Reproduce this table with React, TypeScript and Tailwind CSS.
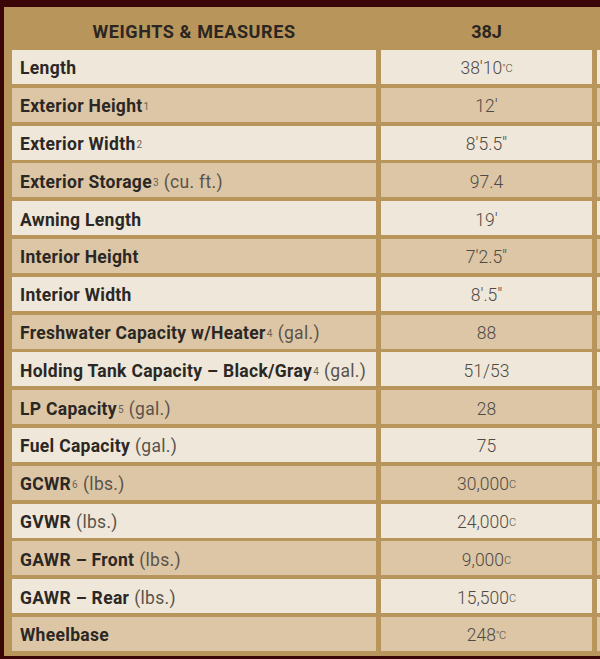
import React from "react";

type Row = { label: React.ReactNode; value: React.ReactNode };

const Sup = ({ children }: { children: React.ReactNode }) => (
  <sup className="text-[10px] font-normal text-[#6b6259] relative -top-[2px] ml-[1px]">{children}</sup>
);
const Unit = ({ children }: { children: React.ReactNode }) => (
  <span className="font-normal text-[#5a534c] ml-[5px]">{children}</span>
);
const VSup = ({ children }: { children: React.ReactNode }) => (
  <sup className="text-[11px] relative -top-[2px]">{children}</sup>
);

const rows: Row[] = [
  { label: <>Length</>, value: <>38'10<VSup>"C</VSup></> },
  { label: <>Exterior Height<Sup>1</Sup></>, value: <>12'</> },
  { label: <>Exterior Width<Sup>2</Sup></>, value: <>8'5.5"</> },
  { label: <>Exterior Storage<Sup>3</Sup><Unit>(cu. ft.)</Unit></>, value: <>97.4</> },
  { label: <>Awning Length</>, value: <>19'</> },
  { label: <>Interior Height</>, value: <>7'2.5"</> },
  { label: <>Interior Width</>, value: <>8'.5"</> },
  { label: <>Freshwater Capacity w/Heater<Sup>4</Sup><Unit>(gal.)</Unit></>, value: <>88</> },
  { label: <>Holding Tank Capacity – Black/Gray<Sup>4</Sup><Unit>(gal.)</Unit></>, value: <>51/53</> },
  { label: <>LP Capacity<Sup>5</Sup><Unit>(gal.)</Unit></>, value: <>28</> },
  { label: <>Fuel Capacity<Unit>(gal.)</Unit></>, value: <>75</> },
  { label: <>GCWR<Sup>6</Sup><Unit>(lbs.)</Unit></>, value: <>30,000<VSup>C</VSup></> },
  { label: <>GVWR<Unit>(lbs.)</Unit></>, value: <>24,000<VSup>C</VSup></> },
  { label: <>GAWR – Front<Unit>(lbs.)</Unit></>, value: <>9,000<VSup>C</VSup></> },
  { label: <>GAWR – Rear<Unit>(lbs.)</Unit></>, value: <>15,500<VSup>C</VSup></> },
  { label: <>Wheelbase</>, value: <>248<VSup>"C</VSup></> },
];

export default function App() {
  return (
    <div
      className="w-[600px] h-[659px] overflow-hidden bg-[#3a0608] pt-[7px] pl-[4px]"
      style={{ fontFamily: "Roboto, 'Liberation Sans', sans-serif" }}
    >
      <div className="w-[620px] bg-[#b8955a] pl-[8px] pb-[5px]">
        <div className="grid grid-cols-[364px_211px_100px] gap-x-[5px] h-[43px] items-center">
          <div className="text-center font-bold text-[18px] tracking-[0.6px] text-[#2b2622] pt-[5px]">
            WEIGHTS &amp; MEASURES
          </div>
          <div className="text-center font-bold text-[18px] text-[#2b2622] pt-[5px]">38J</div>
          <div />
        </div>
        <div className="flex flex-col gap-[3.8px]">
          {rows.map((r, i) => {
            const bg = i % 2 === 0 ? "bg-[#efe7d9]" : "bg-[#dcc6a5]";
            return (
              <div key={i} className="grid grid-cols-[364px_211px_100px] gap-x-[5px] h-[34px]">
                <div className={`${bg} flex items-center pl-[8px] pt-[3px] font-bold text-[17.5px] tracking-[0.3px] text-[#2b2724]`}>
                  <span>{r.label}</span>
                </div>
                <div className={`${bg} flex items-center justify-center pt-[3px] font-light text-[17.5px] text-[#4f4a45]`}>
                  <span>{r.value}</span>
                </div>
                <div className={bg} />
              </div>
            );
          })}
        </div>
      </div>
    </div>
  );
}
